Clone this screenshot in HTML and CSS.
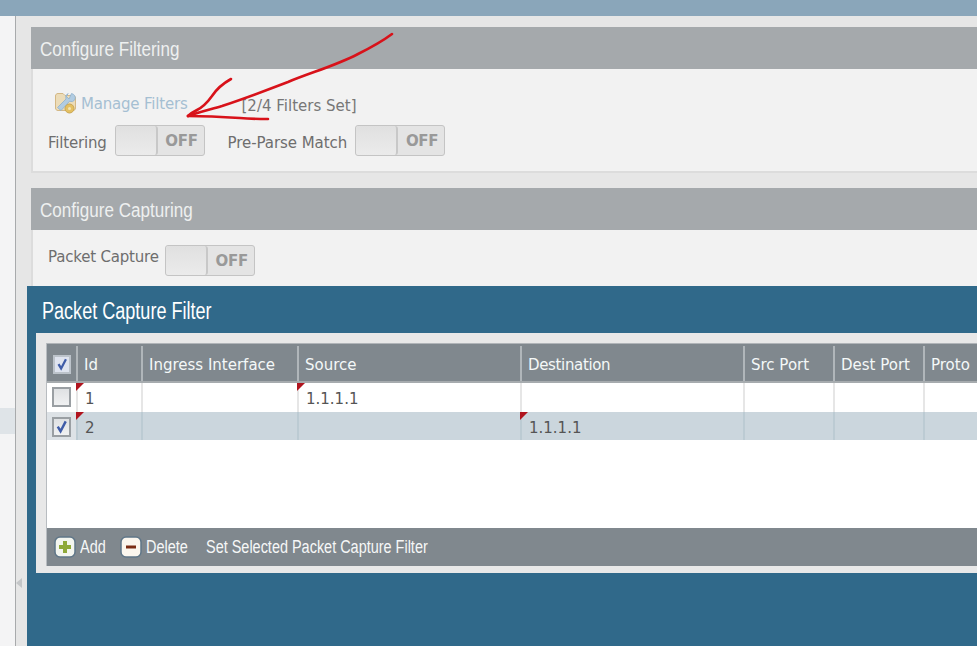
FILE: index.html
```html
<!DOCTYPE html>
<html lang="en">
<head>
<meta charset="utf-8">
<title>Packet Capture Filter</title>
<link rel="stylesheet" href="styles.css">
</head>
<body>
<div class="topbar"></div>
<div class="layout">
  <aside class="sidebar">
    <div class="side-row"></div>
    <svg class="side-arrow" width="7" height="10" viewBox="0 0 7 10"><path d="M6 0v10L0 5z" fill="#c4c6c8"/></svg>
  </aside>
  <main class="main">
    <section class="panel panel-filter">
      <h2 class="panel-head"><span class="narrow">Configure Filtering</span></h2>
      <div class="panel-body">
        <div class="manage-row">
          <svg class="manage-icon" width="24" height="24" viewBox="0 0 24 24">
            <path d="M1.500 5c0-1.500 1-2.500 2.500-2.500h5l2 2h8c1.500 0 2.500 1 2.500 2.500v10c0 1.500-1 2.500-2.500 2.500H4c-1.500 0-2.500-1-2.500-2.500z" fill="#ecd9ae" stroke="#cfae72"/>
            <path d="M17.500 2.500a4.500 4.500 0 0 1 3.500 6 4.500 4.500 0 0 1-5.500 1.800L7 19.500l-3.500-3 8.500-8.500A4.500 4.500 0 0 1 14 2.500l-1.500 3 2.500 2.500z" fill="#a6c6e0" stroke="#7fa6c6" stroke-width=".8"/>
            <circle cx="15.500" cy="17.500" r="4.500" fill="#e2b84a" stroke="#c39a38"/>
            <circle cx="15.500" cy="17.500" r="1.500" fill="#f4e4ac"/>
          </svg>
          <span class="manage-link">Manage Filters</span>
          <span class="manage-status">[2/4 Filters Set]</span>
        </div>
        <div class="toggle-row">
          <span class="field-label">Filtering</span>
          <span class="toggle"><span class="knob"></span><span class="off">OFF</span></span>
          <span class="field-label second">Pre-Parse Match</span>
          <span class="toggle"><span class="knob"></span><span class="off">OFF</span></span>
        </div>
      </div>
    </section>
    <section class="panel panel-capture">
      <h2 class="panel-head"><span class="narrow">Configure Capturing</span></h2>
      <div class="panel-body">
        <div class="capture-row">
          <span class="field-label">Packet Capture</span>
          <span class="toggle low"><span class="knob"></span><span class="off">OFF</span></span>
        </div>
      </div>
    </section>
  </main>
</div>

<div class="dialog">
  <h1 class="dialog-title"><span class="narrow">Packet Capture Filter</span></h1>
  <div class="dialog-box">
    <div class="grid-wrap">
      <div class="row head">
        <div class="cell"><span class="check head-check"><svg viewBox="0 0 16 16"><path d="M4 7.500l3 5 5.500-10.500" fill="none" stroke="#3f5ca8" stroke-width="2.600"/></svg></span></div>
        <div class="cell">Id</div>
        <div class="cell">Ingress Interface</div>
        <div class="cell">Source</div>
        <div class="cell tight">Destination</div>
        <div class="cell">Src Port</div>
        <div class="cell">Dest Port</div>
        <div class="cell">Proto</div>
      </div>
      <div class="row data first">
        <div class="cell"><span class="check"></span></div>
        <div class="cell flag">1</div>
        <div class="cell"></div>
        <div class="cell flag">1.1.1.1</div>
        <div class="cell"></div>
        <div class="cell"></div>
        <div class="cell"></div>
        <div class="cell"></div>
      </div>
      <div class="row data selected">
        <div class="cell"><span class="check"><svg viewBox="0 0 16 16"><path d="M4 7.500l3 5 5.500-10.500" fill="none" stroke="#3f5ca8" stroke-width="2.600"/></svg></span></div>
        <div class="cell flag">2</div>
        <div class="cell"></div>
        <div class="cell"></div>
        <div class="cell flag">1.1.1.1</div>
        <div class="cell"></div>
        <div class="cell"></div>
        <div class="cell"></div>
      </div>
      <div class="grid-empty"></div>
      <div class="toolbar">
        <span class="tool">
          <svg width="22" height="22" viewBox="0 0 22 22"><rect x="1" y="1" width="20" height="20" rx="5" fill="#f3f5ef" stroke="#5f7688" stroke-width="1.500"/><path d="M11 5v12M5 11h12" stroke="#8fa93a" stroke-width="4"/></svg>
          <span class="tool-label w-add">Add</span>
        </span>
        <span class="tool">
          <svg width="22" height="22" viewBox="0 0 22 22"><rect x="1" y="1" width="20" height="20" rx="5" fill="#fbf6ee" stroke="#5f7688" stroke-width="1.500"/><path d="M6 11h10" stroke="#7a2c14" stroke-width="3"/></svg>
          <span class="tool-label w-del">Delete</span>
        </span>
        <span class="tool set"><span class="tool-label w-set">Set Selected Packet Capture Filter</span></span>
      </div>
    </div>
  </div>
</div>

<svg class="scribble" width="977" height="646" viewBox="0 0 977 646">
  <path d="M392 34C380 43 372 47 358 54C335 66 312 72 288 82C262 92 240 100 222 106C208 110 196 113 188 116" fill="none" stroke="#d8121a" stroke-width="2.600" stroke-linecap="round"/>
  <path d="M231 79C222 84 216 90 212 96C207 103 203 107 197 110C193 112 190 114 188 116" fill="none" stroke="#d8121a" stroke-width="2.600" stroke-linecap="round"/>
  <path d="M188 116C205 116 225 117 240 118C250 119 260 119 268 119" fill="none" stroke="#d8121a" stroke-width="2.600" stroke-linecap="round"/>
</svg>
</body>
</html>
```

FILE: styles.css
```css
* { box-sizing: border-box; }
html, body { margin: 0; padding: 0; }
body {
  width: 977px;
  height: 646px;
  overflow: hidden;
  position: relative;
  background: #e6e6e6;
  font-family: "DejaVu Sans", Tahoma, sans-serif;
  font-size: 14px;
  color: #666;
}
.topbar { height: 16px; background: #8aa6ba; }
.layout { display: flex; height: 630px; }
.sidebar {
  width: 16px;
  flex: none;
  background: #f4f4f5;
  border-right: 1px solid #a8aaac;
  padding-top: 392px;
  position: relative;
}
.side-row { height: 26px; background: #dfe4e8; }
.side-arrow { position: absolute; left: 16px; top: 562px; }
.main { flex: 1; padding: 11px 0 0 15px; min-width: 0; }
.panel { background: #f2f2f2; }
.panel-filter { height: 146px; border-bottom: 2px solid #dcdcdc; border-left: 2px solid #dcdcdc; }
.panel-capture { margin-top: 15px; height: 120px; border-left: 2px solid #dcdcdc; }
.panel-head {
  margin: 0 0 0 -2px;
  height: 42px;
  padding: 0 0 0 9px;
  background: #a5a9ac;
  color: #eef0f0;
  font-family: "Liberation Sans", sans-serif;
  font-weight: 400;
  font-size: 20px;
  line-height: 45px;
}
.narrow { display: inline-block; white-space: nowrap; transform-origin: left center; transform: scaleX(.853); }
.panel-body { padding: 20px 0 0 15px; }
.panel-capture .panel-body { padding: 14px 0 0 15px; }
.manage-row { display: flex; align-items: center; height: 28px; padding-left: 6px; }
.manage-icon { margin-right: 3px; opacity: .85; }
.manage-link { color: #a5bfd2; font-size: 15px; letter-spacing: -.2px; padding-top: 2px; }
.manage-status { margin-left: 54px; color: #777; font-size: 15px; position: relative; top: 3px; }
.toggle-row { display: flex; align-items: center; margin-top: 7px; height: 32px; }
.capture-row { display: flex; align-items: flex-start; }
.field-label { font-size: 15px; letter-spacing: -.2px; color: #6e6e6e; line-height: 24px; }
.capture-row .field-label { padding-top: 1px; }
.toggle-row .field-label { padding-top: 6px; }
.field-label.second { margin-left: 23px; letter-spacing: -.07px; }
.toggle {
  width: 90px;
  height: 31px;
  margin-left: 8px;
  display: flex;
  background: #e4e4e4;
  border: 1px solid #c4c4c4;
  border-radius: 3px;
  flex: none;
}
.toggle.low { margin-left: 6px; margin-top: 1px; }
.knob { width: 42px; background: linear-gradient(#e0e0e0, #ebebeb); border-right: 2px solid #c8c8c8; border-radius: 3px; }
.off { flex: 1; padding-left: 2px; text-align: center; color: #999; font-weight: 700; font-size: 15px; letter-spacing: -.3px; line-height: 30px; }
.toggle.low .off { line-height: 31px; }

.dialog {
  position: absolute;
  left: 27px;
  right: 0;
  top: 286px;
  height: 360px;
  background: #30698a;
  padding: 0 0 0 9px;
}
.dialog-title {
  margin: 0;
  height: 47px;
  padding-left: 6px;
  color: #fff;
  font-family: "Liberation Sans", sans-serif;
  font-weight: 400;
  font-size: 23px;
  line-height: 51px;
}
.dialog-title .narrow { transform: scaleX(.785); }
.dialog-box {
  height: 240px;
  background: #e8e8e8;
  padding: 10px 0 0 10px;
}
.grid-wrap { height: 223px; border-left: 1px solid #b8bcc0; display: flex; flex-direction: column; background: #fff; }
.row {
  display: grid;
  grid-template-columns: 29px 65px 156px 223px 223px 90px 90px 1fr;
  flex: none;
}
.row.head { height: 40px; background: #80888e; color: #f4f8f8; border-bottom: 2px solid #a6abae; border-top: 1px solid #b0b4b8; }
.row.head .cell { padding-left: 6px; font-size: 15px; border-left: 2px solid #b0b6ba; margin-top: 2px; height: 35px; line-height: 39px; white-space: nowrap; overflow: hidden; }
.row.head .cell:first-child { border-left: 0; }
.row.head .cell.tight { letter-spacing: -.35px; }
.row.data .cell { padding-left: 7px; font-size: 15px; color: #555; border-left: 2px solid #e6e6e6; position: relative; }
.row.data .cell:first-child { border-left: 0; padding-left: 5px; }
.row.first { height: 29px; line-height: 32px; }
.row.first .cell { height: 29px; }
.row.selected { height: 28px; line-height: 32px; background: #cbd6dd; }
.row.selected .cell { height: 28px; border-left-color: #bccbd3; color: #555; }
.row.selected .cell:first-child { background: #dde2e6; }
.flag::before {
  content: "";
  position: absolute;
  left: -2px;
  top: 0;
  border-top: 8px solid #b0141e;
  border-right: 8px solid transparent;
}
.check {
  display: block;
  width: 19px;
  height: 20px;
  margin-top: 4px;
  background: linear-gradient(#dfe1e3, #f0f1f2);
  border: 2px solid #9a9fa3;
}
.row.selected .check { margin-top: 5px; }
.check svg { display: block; width: 15px; height: 16px; }
.head-check { margin-top: 9px; border-color: #bcc3ca; background: #dfe4ef; width: 18px; height: 19px; }
.head-check svg { width: 14px; height: 15px; }
.grid-empty { flex: 1; background: #fff; }
.toolbar {
  height: 38px;
  flex: none;
  background: #80888e;
  color: #f6f7f7;
  display: flex;
  align-items: center;
  gap: 14px;
  padding-left: 7px;
  font-family: "Liberation Sans", sans-serif;
  font-size: 18px;
}
.tool { display: flex; align-items: center; gap: 4px; }
.tool.set { margin-left: 4px; }
.tool-label { display: inline-block; white-space: nowrap; transform-origin: left center; transform: scaleX(.803); }
.w-add { width: 26px; }
.w-del { width: 42px; }
.w-set { width: 221px; }
.scribble { position: absolute; left: 0; top: 0; pointer-events: none; }
```
